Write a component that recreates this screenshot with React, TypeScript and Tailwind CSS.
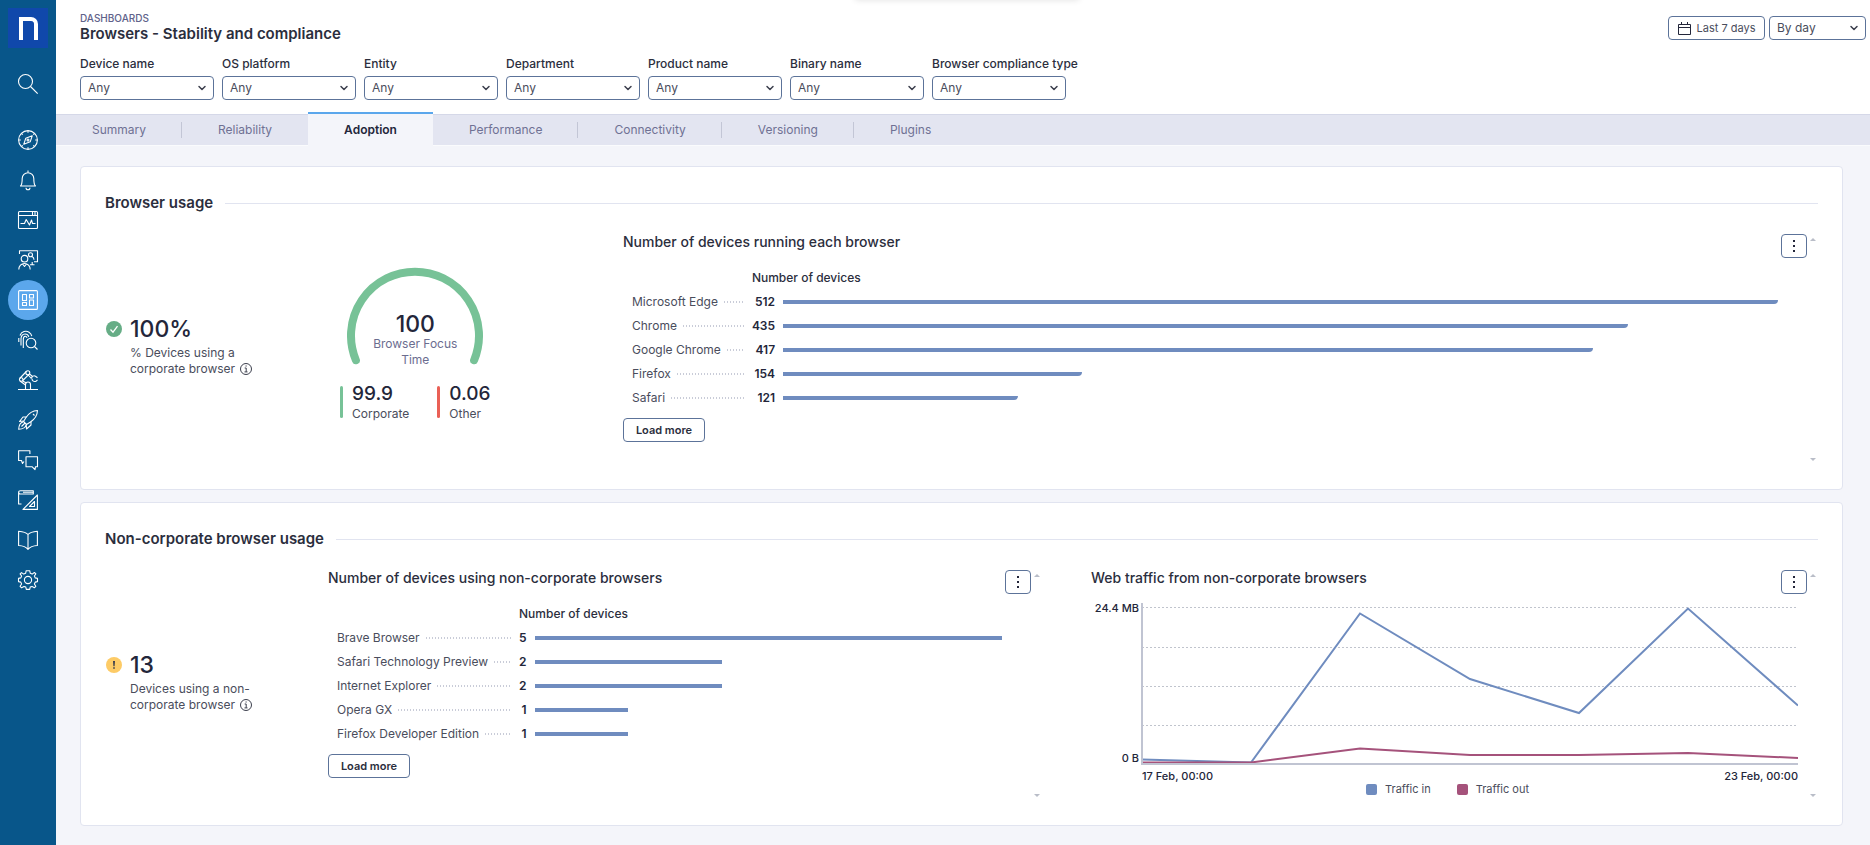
import { useState, type ReactNode } from 'react';
import { ChevronDown } from 'lucide-react';
import clsx from 'clsx';

interface BarRow {
  label: string;
  value: number;
}

interface SidebarItem {
  label: string;
  icon: ReactNode;
}

const FILTERS = [
  'Device name',
  'OS platform',
  'Entity',
  'Department',
  'Product name',
  'Binary name',
  'Browser compliance type',
];

const TABS = [
  'Summary',
  'Reliability',
  'Adoption',
  'Performance',
  'Connectivity',
  'Versioning',
  'Plugins',
];

const BROWSERS: BarRow[] = [
  { label: 'Microsoft Edge', value: 512 },
  { label: 'Chrome', value: 435 },
  { label: 'Google Chrome', value: 417 },
  { label: 'Firefox', value: 154 },
  { label: 'Safari', value: 121 },
];

const NON_CORPORATE: BarRow[] = [
  { label: 'Brave Browser', value: 5 },
  { label: 'Safari Technology Preview', value: 2 },
  { label: 'Internet Explorer', value: 2 },
  { label: 'Opera GX', value: 1 },
  { label: 'Firefox Developer Edition', value: 1 },
];

const SIDEBAR_ITEMS: SidebarItem[] = [
  {
    label: 'Investigations',
    icon: (
      <>
        <circle cx="10" cy="10" r="9.4" />
        <path d="M14.2 5.8 12.2 11.8 5.8 14.2 7.8 8.2Z" />
        <circle cx="10" cy="10" r="1" />
        <path d="M10 .8v2M10 17.2v2M.8 10h2M17.2 10h2M3.5 3.5l1.2 1.2M15.3 15.3l1.2 1.2M3.5 16.5l1.2-1.2M15.3 4.7l1.2-1.2" />
      </>
    ),
  },
  {
    label: 'Alerts',
    icon: (
      <>
        <path d="M2.5 16c1.5-1.2 1.7-2.8 1.7-7.5a5.8 5.8 0 0 1 11.6 0c0 4.7.2 6.3 1.7 7.5Z" />
        <path d="M10 .5v2M8 17.8a2 2 0 0 0 4 0" />
      </>
    ),
  },
  {
    label: 'Monitoring',
    icon: (
      <>
        <rect x=".5" y="1.5" width="19" height="17" rx="1" />
        <path d="M.5 5.5h19M14.5 2v3M17 2v3M2.5 13.5h4l1.7-4 3.3 5.5 2-5 1 3.5h3" />
      </>
    ),
  },
  {
    label: 'Collaboration',
    icon: (
      <>
        <path d="M1.5 4V.8h18v11h-3.5M12 14.8h4.5M14.2 12v2.8" />
        <circle cx="12.5" cy="4.8" r="2" />
        <path d="M14 6.5c1.5.7 2 1.8 2 3.2" />
        <circle cx="6.5" cy="8.7" r="3.3" />
        <path d="M.8 19.5c0-3.5 2.5-6 5.7-6s5.7 2.5 5.7 6M4.5 14l2 2.5 2-2.5" />
      </>
    ),
  },
  {
    label: 'Dashboards',
    icon: (
      <>
        <rect x=".6" y=".6" width="18.8" height="18.8" rx="1" />
        <path d="M4.5 4.5h4v6h-4zM11.500 4.500h4v3.500h-4zM11.500 10h4v5.500h-4zM4.500 12.500h4v3h-4z" />
      </>
    ),
  },
  {
    label: 'Diagnostics',
    icon: (
      <>
        <circle cx="13" cy="13" r="4.8" />
        <path d="m16.5 16.5 3 3M2 5.5C3.5 1.500 8 .2 11 2.200c1.500 1 2.500 2.500 2.800 4M.8 8v4M3 15.500V9c0-3 1.500-5 4-5 2 0 3.300 1.200 3.800 2.800M5.300 18V9.500c0-2 .7-3.200 2-3.200 1 0 1.500.7 1.700 1.500" />
      </>
    ),
  },
  {
    label: 'Automation',
    icon: (
      <>
        <path d="M0 19.500h20M7.500 19v-4.500a2.500 2.500 0 0 1 5 0V19" />
        <circle cx="9.800" cy="2.800" r="2" />
        <circle cx="3.200" cy="9.500" r="1.800" />
        <path d="m8.300 1.500-6.600 7M11 4.300 4.800 10.500M4.500 11l4 2M2 11l5.500 4M11.500 3.800l3 2.700M10.300 5l3 3.500M13.500 8.500c.3-2.300 2.300-3.300 4-2.300M14 8.800c0 2.200 2 3.200 4 2.500M17.500 6.200l2 1.500M18 11.300l1.500-1.500" />
      </>
    ),
  },
  {
    label: 'Campaigns',
    icon: (
      <>
        <path d="M19.500.5c-5 .2-8.500 2.500-11.500 7l-2.500 4 3 3 4-2.500c4.500-3 6.800-6.500 7-11.500Z" />
        <path d="M8.500 7H5L1.500 11.500l4-.5M13 11.500V15l-4.500 4-.2-4.500M5 12c-2.500.5-4 3-4.300 7.200C4.500 19 7.500 17.500 8 15M3.500 16.500l3.500-3.500M15 4l1.500 1.500" />
      </>
    ),
  },
  {
    label: 'Feedback',
    icon: (
      <>
        <path d="M6 11.500 4.500 13.500 3.500 10.500H.6V.8h11.300V4" />
        <path d="M8.500 6.700h11v10h-2l-.5 3-3-3h-6v-10Z" />
      </>
    ),
  },
  {
    label: 'Content designer',
    icon: (
      <>
        <path d="M3.500 14H.6V2.500C.6 1.200 1.200.7 2.500.7h12.800V4H2.500C1.500 4 .8 3.500.8 2.500M15.300 2.300H5" />
        <path d="M19.400 5v14.400H5Z" />
        <path d="M16.500 11.500v5H11.500Z" />
      </>
    ),
  },
  {
    label: 'Library',
    icon: (
      <path d="M10 4.500C8 2 4.500 1.500.6 1.200v14.300c4 .2 7.200 1 9.400 3.800 2.200-2.800 5.400-3.600 9.400-3.800V1.200C15.500 1.500 12 2 10 4.500Zm0 0V19" />
    ),
  },
  {
    label: 'Settings',
    icon: (
      <>
        <path d="m8.200.7-.6 2.600-1.800.8-2.300-1.500-1.400 1.300L3.600 6l-.8 1.900-2.300.5v3.200l2.300.5.8 1.900-1.500 2.300 1.500 1.500L6 16.400l1.800.7.5 2.300h3.400l.5-2.300 1.800-.7 2.300 1.400 1.500-1.500-1.400-2.300.8-1.900 2.300-.5V8.400l-2.300-.5L16.400 6l1.500-2.200-1.500-1.300-2.300 1.600-1.800-.8-.6-2.600Z" />
        <circle cx="10" cy="10" r="3.600" />
      </>
    ),
  },
];

const LineIcon = ({ children }: { children: ReactNode }) => (
  <svg
    viewBox="0 0 20 20"
    className="size-5 overflow-visible"
    fill="none"
    stroke="currentColor"
    strokeWidth="1.1"
    strokeLinejoin="round"
    aria-hidden="true"
  >
    {children}
  </svg>
);

const Sidebar = () => (
  <aside className="flex w-14 shrink-0 flex-col items-center bg-[#08568a] pt-2 text-white">
    <a href="#" aria-label="Home" className="flex size-10 items-center justify-center bg-[#1048ab]">
      <span className="h-[23px] w-[19px] rounded-tr-[7px] border-4 border-b-0 border-white" />
    </a>
    <button type="button" aria-label="Search" className="mt-4 flex size-10 items-center justify-center">
      <LineIcon>
        <circle cx="7.500" cy="7.500" r="7" />
        <path d="m12.500 12.500 7.200 7.200" />
      </LineIcon>
    </button>
    <nav className="mt-4 flex flex-col">
      {SIDEBAR_ITEMS.map((item) => (
        <a
          key={item.label}
          href="#"
          aria-label={item.label}
          className={clsx(
            'flex size-10 items-center justify-center rounded-full',
            item.label === 'Dashboards' && 'bg-[#5ba7ec]'
          )}
        >
          <LineIcon>{item.icon}</LineIcon>
        </a>
      ))}
    </nav>
  </aside>
);

interface SelectBoxProps {
  id: string;
  options: string[];
  className?: string;
  ariaLabel?: string;
}

const SelectBox = ({ id, options, className, ariaLabel }: SelectBoxProps) => (
  <div className={clsx('relative', className)}>
    <select
      id={id}
      aria-label={ariaLabel}
      className="block h-6 w-full appearance-none rounded border border-[#5c7399] bg-white px-[7px] text-xs text-[#4a4d5c]"
    >
      {options.map((option) => (
        <option key={option}>{option}</option>
      ))}
    </select>
    <ChevronDown
      className="pointer-events-none absolute top-1.5 right-1.5 size-3 text-[#3c3f4d]"
      strokeWidth={3}
    />
  </div>
);

const PageHeader = () => (
  <header className="flex items-start justify-between bg-white pt-3 pr-1 pb-3.5 pl-6">
    <div>
      <div className="text-[10px] leading-3 font-medium text-[#60628a]">DASHBOARDS</div>
      <h1 className="text-[15px] leading-5 font-semibold text-[#2b2e3d]">
        Browsers - Stability and compliance
      </h1>
      <div className="mt-3 flex gap-2">
        {FILTERS.map((filter) => {
          const id = filter.toLowerCase().replaceAll(' ', '-');
          return (
            <div key={filter} className="w-[134px]">
              <label
                htmlFor={id}
                className="block text-xs leading-4 font-medium whitespace-nowrap text-[#2b2e3d]"
              >
                {filter}
              </label>
              <SelectBox id={id} options={['Any']} className="mt-1" />
            </div>
          );
        })}
      </div>
    </div>
    <div className="mt-1 flex gap-1">
      <button
        type="button"
        className="flex h-6 w-[97px] items-center justify-center gap-1.5 rounded border border-[#5c7399] text-[11px] whitespace-nowrap text-[#4a4d5c]"
      >
        <svg viewBox="0 0 13 13" className="size-[13px]" fill="none" stroke="#23263a" aria-hidden="true">
          <path d="M.5 2.500h12v10H.5zM.5 5.500h12M3.500 0v3M9.500 0v3" />
        </svg>
        Last 7 days
      </button>
      <SelectBox
        id="granularity"
        options={['By day', 'By hour']}
        className="w-[97px]"
        ariaLabel="Granularity"
      />
    </div>
  </header>
);

interface TabBarProps {
  active: string;
  onChange: (tab: string) => void;
}

const TabBar = ({ active, onChange }: TabBarProps) => (
  <div role="tablist" className="flex h-8 border-t border-b border-t-[#d5d8e8] border-b-[#fafbfd] bg-[#e3e5f1]">
    {TABS.map((tab, i) => {
      const isActive = tab === active;
      const hasDivider = !isActive && i < TABS.length - 1 && TABS[i + 1] !== active;
      return (
        <button
          key={tab}
          type="button"
          role="tab"
          aria-selected={isActive}
          onClick={() => onChange(tab)}
          className={clsx(
            'flex items-center text-xs',
            isActive
              ? '-mt-[3px] -mb-px border-t-2 border-[#5ba7ec] bg-[#f4f5fa] font-semibold text-[#23263a]'
              : 'text-[#6f7194]'
          )}
        >
          <span className="px-9">{tab}</span>
          {hasDivider && <span className="-ml-px h-4 w-px bg-[#c3c6d6]" />}
        </button>
      );
    })}
  </div>
);

const Section = ({ title, children }: { title: string; children: ReactNode }) => (
  <section className="flex min-h-[324px] flex-col rounded border border-[#e1e4f0] bg-white px-6 pt-6 pb-[26px]">
    <div className="flex items-center gap-3">
      <h2 className="text-[15px] leading-6 font-semibold text-[#2b2e3d]">{title}</h2>
      <div className="h-px flex-1 bg-[#e1e4f0]" />
    </div>
    {children}
  </section>
);

interface WidgetProps {
  title: string;
  className?: string;
  children: ReactNode;
}

const Widget = ({ title, className, children }: WidgetProps) => (
  <div className={clsx('flex', className)}>
    <div className="min-w-0 flex-1">
      <div className="flex items-start justify-between">
        <h3 className="text-sm leading-5 font-medium text-[#2b2e3d]">{title}</h3>
        <button
          type="button"
          aria-label="Widget menu"
          className="mt-0.5 flex h-6 w-[26px] items-center justify-center rounded border border-[#5c7399]"
        >
          <svg viewBox="0 0 2 12" className="h-3 w-0.5" fill="#23263a" aria-hidden="true">
            <path d="M0 0h2v2H0zM0 5h2v2H0zM0 10h2v2H0z" />
          </svg>
        </button>
      </div>
      {children}
    </div>
    <div className="flex w-[11px] flex-col items-center justify-between pt-1.5 pb-0.5">
      <svg viewBox="0 0 6 3" className="h-[3px] w-1.5" fill="#b9bdc8" aria-hidden="true">
        <path d="M0 3 3 0 6 3z" />
      </svg>
      <svg viewBox="0 0 6 3" className="h-[3px] w-1.5" fill="#b9bdc8" aria-hidden="true">
        <path d="M0 0 3 3 6 0z" />
      </svg>
    </div>
  </div>
);

const BarTable = ({ rows, rounded = false }: { rows: BarRow[]; rounded?: boolean }) => {
  const max = Math.max(...rows.map((row) => row.value));
  return (
    <>
      <div className="mt-2 pr-[29px] pl-[9px]">
        <table className="w-full text-xs">
          <thead>
            <tr className="h-6">
              <td />
              <th colSpan={2} className="p-0 text-left font-medium text-[#2b2e3d]">
                Number of devices
              </th>
            </tr>
          </thead>
          <tbody>
            {rows.map((row) => (
              <tr key={row.label} className="h-6">
                <th scope="row" className="p-0 font-normal whitespace-nowrap text-[#4a4d5c]">
                  <div className="flex items-center gap-1.5 pr-2">
                    {row.label}
                    <span className="h-0.5 min-w-[17px] flex-1 bg-[repeating-linear-gradient(90deg,#c9ccd8_0_1px,transparent_1px_3px)]" />
                  </div>
                </th>
                <td className="p-0 text-right font-semibold text-[#23263a]">{row.value}</td>
                <td className="w-full p-0 pl-2">
                  <div
                    className={clsx('h-1 bg-[#6f8cbf]', rounded && 'rounded-br')}
                    style={{ width: `${(row.value / max) * 100}%` }}
                  />
                </td>
              </tr>
            ))}
          </tbody>
        </table>
      </div>
      <button
        type="button"
        className="mt-2 h-6 w-[82px] rounded border border-[#5c7399] text-[11px] font-semibold text-[#2b2e3d]"
      >
        Load more
      </button>
    </>
  );
};

interface MetricProps {
  status: 'good' | 'warning';
  value: string;
  lines: [string, string];
}

const Metric = ({ status, value, lines }: MetricProps) => (
  <div className="flex items-center pb-1.5 pl-px">
    <div className="flex gap-2">
      <svg viewBox="0 0 16 16" className="mt-2 size-4" aria-hidden="true">
        {status === 'good' ? (
          <>
            <circle cx="8" cy="8" r="8" fill="#66ad86" />
            <path d="m4.500 8.500 2.500 2.700 4.500-6" fill="none" stroke="#fff" strokeWidth="1.300" />
          </>
        ) : (
          <>
            <circle cx="8" cy="8" r="8" fill="#fdcb66" />
            <path d="M7 4h2l-.4 5.200H7.400zM7.200 10.300h1.600v1.500H7.200z" fill="#3c3f4d" />
          </>
        )}
      </svg>
      <div>
        <div className="text-[23px] leading-8 font-medium text-[#23263a]">{value}</div>
        <div className="text-xs leading-4 whitespace-nowrap text-[#4a4d5c]">
          {lines[0]}
          <div className="flex items-center gap-[5px]">
            {lines[1]}
            <svg viewBox="0 0 12 12" className="size-3" fill="none" stroke="#3c3f4d" aria-hidden="true">
              <circle cx="6" cy="6" r="5.500" />
              <path d="M4.700 5h1.500v3.800M4.500 8.900h3M5.500 3h1.200" />
            </svg>
          </div>
        </div>
      </div>
    </div>
  </div>
);

const GaugeStat = ({ value, label, barClass }: { value: string; label: string; barClass: string }) => (
  <div className="flex gap-[9px]">
    <div className={clsx('h-8 w-[3px] rounded-full', barClass)} />
    <div>
      <div className="text-[19px] leading-4 font-medium text-[#23263a]">{value}</div>
      <div className="mt-1 text-xs leading-4 text-[#4a4d5c]">{label}</div>
    </div>
  </div>
);

const Gauge = () => (
  <div className="flex items-center pb-1.5 pl-3">
    <div>
      <div className="grid justify-items-center">
        <svg
          viewBox="0 0 136 101"
          className="col-start-1 row-start-1 h-[101px] w-[136px]"
          aria-hidden="true"
        >
          <path
            d="M8.900 93.200A64 64 0 1 1 127.100 93.200"
            fill="none"
            stroke="#77c297"
            strokeWidth="8"
            strokeLinecap="round"
          />
        </svg>
        <div className="col-start-1 row-start-1 w-24 self-end text-center">
          <div className="text-[23px] leading-6 font-medium text-[#23263a]">100</div>
          <div className="text-xs leading-4 text-[#6b6d8f]">Browser Focus Time</div>
        </div>
      </div>
      <div className="mt-[18px] flex gap-7">
        <GaugeStat value="99.9" label="Corporate" barClass="bg-[#77c297]" />
        <GaugeStat value="0.06" label="Other" barClass="bg-[#ea6056]" />
      </div>
    </div>
  </div>
);

const TrafficChart = () => (
  <div className="mt-2 pr-[9px]">
    <div className="flex">
      <div className="flex w-[50px] flex-col justify-between pr-0.5 pb-px text-right text-[11px] leading-3 font-medium whitespace-nowrap text-[#23263a]">
        <span>24.4 MB</span>
        <span>0 B</span>
      </div>
      <svg
        viewBox="0 0 657 163"
        preserveAspectRatio="none"
        className="h-[163px] min-w-0 flex-1"
        fill="none"
        role="img"
        aria-label="Web traffic per day"
      >
        <path
          d="M1 5.500H656M1 45.500H656M1 84.500H656M1 123.500H656"
          stroke="#c0c4cd"
          strokeDasharray="2 2"
          vectorEffect="non-scaling-stroke"
        />
        <polyline
          points="1,157.500 110,160.500 219,11.500 329,77 438,111 547,6.500 657,103.500"
          stroke="#6f8cbf"
          strokeWidth="2"
          vectorEffect="non-scaling-stroke"
        />
        <polyline
          points="1,160.500 110,160.500 219,146.500 329,153 438,153 547,151 657,156"
          stroke="#a5527b"
          strokeWidth="2"
          vectorEffect="non-scaling-stroke"
        />
        <path d="M1 1V162H657" stroke="#c0c4d2" strokeWidth="2" vectorEffect="non-scaling-stroke" />
      </svg>
    </div>
    <div className="mt-[5px] flex justify-between pl-[51px] text-[11px] leading-3 font-medium text-[#23263a]">
      <span>17 Feb, 00:00</span>
      <span>23 Feb, 00:00</span>
    </div>
    <div className="flex justify-center gap-[26px] pl-1.5 text-[11px] leading-[14px] text-[#4a4d5c]">
      <span className="flex items-center gap-2">
        <span className="size-[11px] rounded-xs bg-[#6f8cbf]" />
        Traffic in
      </span>
      <span className="flex items-center gap-2">
        <span className="size-[11px] rounded-xs bg-[#a5527b]" />
        Traffic out
      </span>
    </div>
  </div>
);

export default function App() {
  const [activeTab, setActiveTab] = useState('Adoption');

  return (
    <div className="relative flex min-h-screen overflow-hidden bg-[#f4f5fa] font-['Inter',sans-serif]">
      <Sidebar />
      <div className="min-w-0 flex-1">
        <PageHeader />
        <TabBar active={activeTab} onChange={setActiveTab} />
        <main className="flex flex-col gap-3 pt-5 pr-[27px] pb-[18px] pl-6">
          <Section title="Browser usage">
            <div className="mt-[17px] grid flex-1 grid-cols-[223fr_295fr_1195fr]">
              <Metric status="good" value="100%" lines={['% Devices using a', 'corporate browser']} />
              <Gauge />
              <Widget title="Number of devices running each browser">
                <BarTable rows={BROWSERS} rounded />
              </Widget>
            </div>
          </Section>
          <Section title="Non-corporate browser usage">
            <div className="mt-[17px] grid flex-1 grid-cols-[223fr_763fr_727fr]">
              <Metric status="warning" value="13" lines={['Devices using a non-', 'corporate browser']} />
              <Widget title="Number of devices using non-corporate browsers" className="mr-[49px]">
                <BarTable rows={NON_CORPORATE} />
              </Widget>
              <Widget title="Web traffic from non-corporate browsers">
                <TrafficChart />
              </Widget>
            </div>
          </Section>
        </main>
      </div>
      <div className="absolute bottom-full left-1/2 ml-[-80px] h-2 w-56 shadow-[0_0_6px_rgba(0,0,0,0.12)]" />
    </div>
  );
}
